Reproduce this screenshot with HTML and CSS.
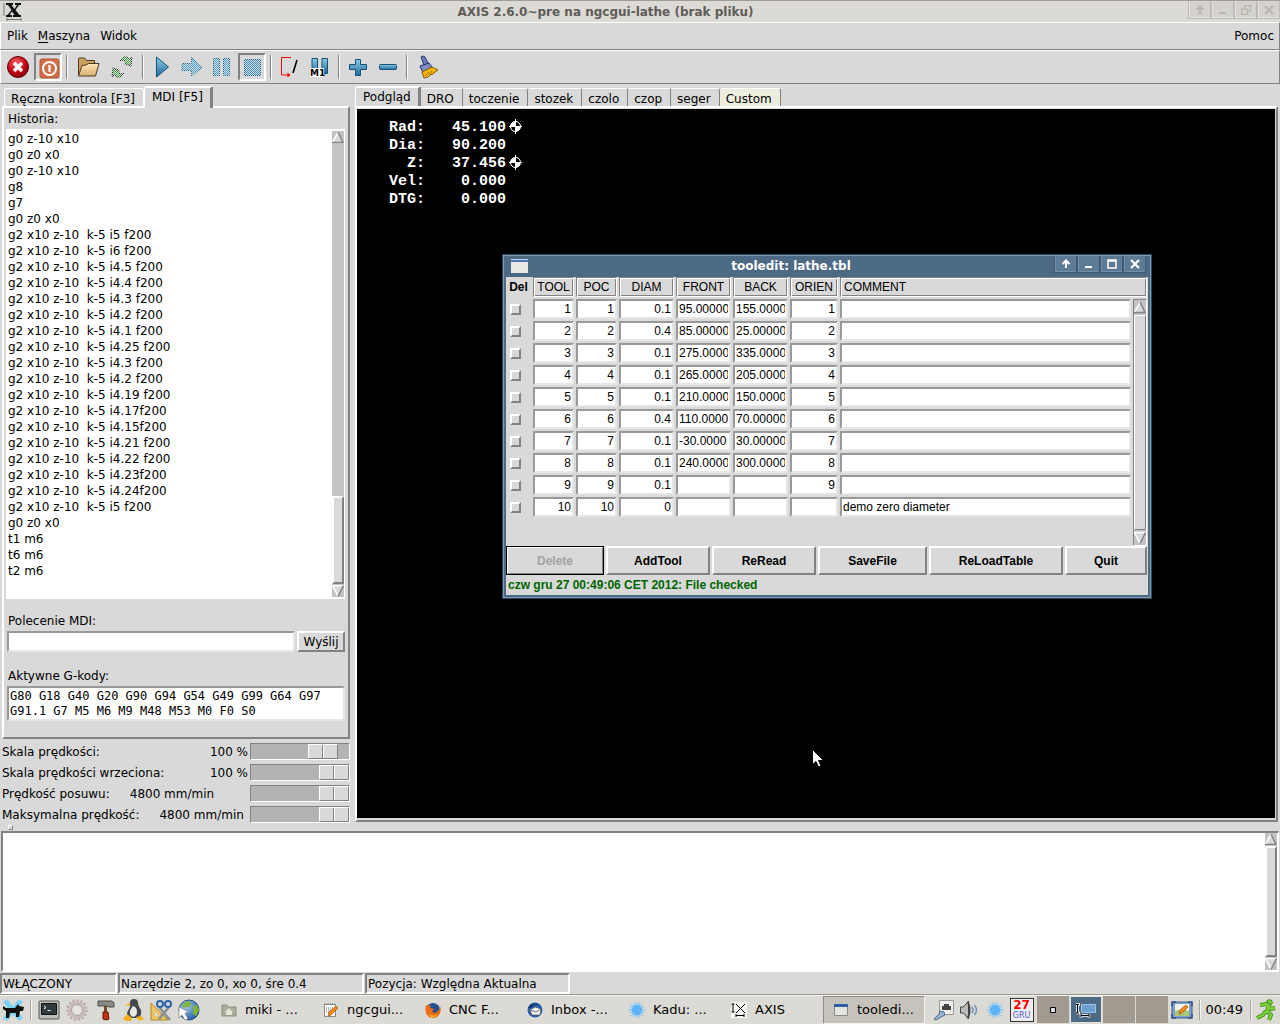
FILE: index.html
```html
<!DOCTYPE html>
<html lang="pl">
<head>
  <meta charset="UTF-8" />
  <meta name="viewport" content="width=device-width, initial-scale=1.0"/>
  <title>AXIS 2.6.0~pre na ngcgui-lathe (brak pliku)</title>
  <link rel="stylesheet" href="styles.css">
</head>
<body>
  <!-- Shared shapes -->
  <svg class="defs" width="0" height="0" aria-hidden="true">
    <defs>
      <linearGradient id="blue" x1="0" y1="0" x2="0" y2="1"><stop offset="0" stop-color="#8fc9e4"/><stop offset="1" stop-color="#1c6c98"/></linearGradient>
      <linearGradient id="folderFill" x1="0" y1="0" x2="0" y2="1"><stop offset="0" stop-color="#ffe6ba"/><stop offset="1" stop-color="#d9ae70"/></linearGradient>
      <radialGradient id="redFill" cx=".4" cy=".3" r=".7"><stop offset="0" stop-color="#f2646a"/><stop offset=".6" stop-color="#cc0a18"/><stop offset="1" stop-color="#8d0009"/></radialGradient>
      <radialGradient id="globeFill" cx=".35" cy=".3" r=".8"><stop offset="0" stop-color="#a9d0f5"/><stop offset="1" stop-color="#1c5299"/></radialGradient>
      <pattern id="dots" width="2" height="2" patternUnits="userSpaceOnUse"><path d="M0 0h1v1H0zM1 1h1v1H1z" fill="#d9d9d9"/></pattern>
    </defs>
    <symbol id="up" viewBox="0 0 12 12"><path d="M0 12L6 0l6 12z" fill="#d9d9d9"/><path d="M.5 11.5L6 1" stroke="#fff" stroke-width="1.5"/><path d="M6 1l5 10.500H0" fill="none" stroke="#828282" stroke-width="1.500"/></symbol>
    <symbol id="down" viewBox="0 0 12 12"><path d="M0 0l6 12 6-12z" fill="#d9d9d9"/><path d="M12 .5H.5L6 11.500" fill="none" stroke="#fff" stroke-width="1.500"/><path d="M6 11.500L11.500.5" stroke="#828282" stroke-width="1.500"/></symbol>
    <symbol id="home" viewBox="0 0 13 15"><circle cx="6.500" cy="7.500" r="5" fill="#fff" stroke="#fff"/><path d="M6.500 7.500v-4.500a4.500 4.500 0 0 1 4.500 4.500zM6.500 7.500v4.500a4.500 4.500 0 0 1-4.500-4.500z" fill="#000"/><path d="M6.500 0v15M0 7.500h13" stroke="#fff"/></symbol>
    <symbol id="sun" viewBox="0 0 16 16"><path d="M8 0v16M0 8h16M2.300 2.300l11.400 11.400M13.700 2.300L2.300 13.700M5 .6l6 14.800M11 .6L5 15.400M.6 5l14.800 6M15.400 5L.6 11" stroke="#8cc8f6" stroke-width="1.300"/><circle cx="8" cy="8" r="5.200" fill="#5db5f5"/></symbol>
    <symbol id="wup" viewBox="0 0 10 10"><path d="M5 9V2M1.500 5L5 1.500 8.500 5" fill="none" stroke="currentColor" stroke-width="2"/></symbol>
    <symbol id="wmin" viewBox="0 0 10 10"><path d="M1 8h7" stroke="currentColor" stroke-width="2"/></symbol>
    <symbol id="wmax" viewBox="0 0 10 10"><path d="M1 1h8v8H1zM1 2h8" fill="none" stroke="currentColor" stroke-width="1.500"/></symbol>
    <symbol id="wrest" viewBox="0 0 10 10"><path d="M.5 4h6v5.500h-6zM3.500 3.500V.8h6v5H7" fill="none" stroke="currentColor" stroke-width="1.300"/></symbol>
    <symbol id="wclose" viewBox="0 0 10 10"><path d="M1 1l8 8M9 1L1 9" stroke="currentColor" stroke-width="2.200"/></symbol>
  </svg>

  <header class="titlebar">
    <svg class="xlogo" width="20" height="20" viewBox="0 0 20 20"><path d="M1 1v13M4 17.500h14M4 16v3M18 16v3" stroke="#777"/><path d="M3 1h7v2H8.500l3 4 2.500-4H12V1h6v2h-2l-3.500 5 4 5H18v2h-8v-2h1.500l-2.500-3.500L6.500 13H9v2H3v-2h1.500l4-5L5 3H3z" fill="#111"/></svg>
    <h1>AXIS 2.6.0~pre na ngcgui-lathe (brak pliku)</h1>
    <div class="winbuttons">
      <button type="button" aria-label="Zwiń"><svg width="10" height="10"><use href="#wup"/></svg></button>
      <button type="button" aria-label="Minimalizuj"><svg width="10" height="10"><use href="#wmin"/></svg></button>
      <button type="button" aria-label="Przywróć"><svg width="10" height="10"><use href="#wrest"/></svg></button>
      <button type="button" aria-label="Zamknij"><svg width="10" height="10"><use href="#wclose"/></svg></button>
    </div>
  </header>

  <nav class="menubar">
    <button type="button">Plik</button>
    <button type="button"><u>M</u>aszyna</button>
    <button type="button">Widok</button>
    <button type="button" class="help">Pomoc</button>
  </nav>

  <div class="toolbar">
    <button type="button" aria-label="Stop awaryjny"><svg width="24" height="24" viewBox="0 0 24 24"><circle cx="12" cy="12" r="10.500" fill="url(#redFill)" stroke="#5c0006"/><path d="M8 8l8 8M16 8l-8 8" stroke="#fff" stroke-width="3.400"/></svg></button>
    <button type="button" class="pressed" aria-label="Zasilanie"><svg width="24" height="24" viewBox="0 0 24 24"><rect x="4" y="4" width="19" height="19" rx="2" fill="#d0704a" stroke="#b4512e"/><circle cx="13.500" cy="13.500" r="6.500" fill="none" stroke="#fff" stroke-width="2"/><path d="M13.500 10v7" stroke="#fff" stroke-width="2.200"/></svg></button>
    <i class="sep"></i>
    <button type="button" class="wide" aria-label="Otwórz"><svg width="24" height="24" viewBox="0 0 24 24"><path d="M2.500 20V4q0-1 1-1h5l2 2.500h8V9" fill="#c99f62" stroke="#4d3a20"/><path d="M2.500 21L6 10.500q5 0 6.500-2H23l-3.500 12.500z" fill="url(#folderFill)" stroke="#4d3a20"/></svg></button>
    <button type="button" class="wide" aria-label="Przeładuj"><svg width="24" height="24" viewBox="0 0 24 24"><path d="M10 5.500C13 1 18 1 19.500 4L22 2.500 21 11l-7-2.500L16.500 7C15 5 13 5 10 5.500z" fill="#3faf3f" stroke="#222"/><path d="M14 18.500C11 23 6 23 4.500 20L2 21.500 3 13l7 2.500L7.500 17c1.500 2 3.500 2 6.500 1.500z" fill="#3faf3f" stroke="#222"/><path d="M0 0h24v24H0z" fill="url(#dots)"/></svg></button>
    <i class="sep"></i>
    <button type="button" aria-label="Start"><svg width="24" height="24" viewBox="0 0 24 24"><path d="M6.500 2v20l12-10z" fill="url(#blue)" stroke="#12527a" stroke-linejoin="round"/></svg></button>
    <button type="button" aria-label="Krok"><svg width="24" height="24" viewBox="0 0 24 24"><path d="M2 8.500h9.500v-6L22 12l-10.500 9.500v-6H2z" fill="#4fa3cf" stroke="#12628f"/><path d="M0 0h24v24H0z" fill="url(#dots)"/></svg></button>
    <button type="button" aria-label="Pauza"><svg width="24" height="24" viewBox="0 0 24 24"><path d="M3.500 3.500h6v17h-6zM13.500 3.500h6v17h-6z" fill="#4fa3cf" stroke="#12628f"/><path d="M0 0h24v24H0z" fill="url(#dots)"/></svg></button>
    <button type="button" class="pressed" aria-label="Zatrzymaj"><svg width="24" height="24" viewBox="0 0 24 24"><path d="M4.500 4.500h16v16h-16z" fill="#3d8fbd" stroke="#12628f"/><path d="M0 0h24v24H0z" fill="url(#dots)"/></svg></button>
    <i class="sep"></i>
    <button type="button" aria-label="Pomiń bloki"><svg width="24" height="24" viewBox="0 0 24 24"><path d="M13 2.500H3.500v17.500H10" fill="none" stroke="#f00"/><path d="M9.500 17.500v5l3-2.500z" fill="#f00"/><path d="M15 18l4-13" stroke="#000" stroke-width="1.600"/></svg></button>
    <button type="button" aria-label="Stop opcjonalny"><svg width="24" height="24" viewBox="0 0 24 24"><path d="M4 3.500h5.500v15H4zM14 3.500h5.500v15H14z" fill="url(#blue)" stroke="#12527a"/><path d="M2 13h14v9H2z" fill="#fff"/><text x="2" y="21" class="m1">M1</text></svg></button>
    <i class="sep"></i>
    <button type="button" aria-label="Powiększ"><svg width="24" height="24" viewBox="0 0 24 24"><path d="M9.500 4.500h5v5h6v5h-6v6h-5v-6h-6v-5h6z" fill="url(#blue)" stroke="#12527a" stroke-linejoin="round"/></svg></button>
    <button type="button" aria-label="Pomniejsz"><svg width="24" height="24" viewBox="0 0 24 24"><rect x="3.500" y="9.500" width="17" height="5" rx="1" fill="url(#blue)" stroke="#12527a"/></svg></button>
    <i class="sep"></i>
    <button type="button" class="wide" aria-label="Wyczyść"><svg width="24" height="24" viewBox="0 0 24 24"><path d="M5 2q2-2 4 0l4 8-4 3z" fill="#6c7fc0" stroke="#26336b"/><path d="M4 11l9-3 3 4-9 6z" fill="#7c8dc8" stroke="#26336b"/><path d="M6 17l10-5 6 3-3 2-2 2-3 1-2 2-4 1z" fill="#f5b70a" stroke="#8a5a00"/><path d="M9 21l4-4M13 20l3-4" stroke="#a86f00"/></svg></button>
  </div>

  <main class="main">
    <section class="side">
      <div class="tabs" role="tablist">
        <button type="button" role="tab" class="tab">Ręczna kontrola [F3]</button>
        <button type="button" role="tab" class="tab active" aria-selected="true">MDI [F5]</button>
      </div>
      <div class="page">
        <div class="label">Historia:</div>
        <div class="history">
          <ul>
            <li>g0 z-10 x10</li>
            <li>g0 z0 x0</li>
            <li>g0 z-10 x10</li>
            <li>g8</li>
            <li>g7</li>
            <li>g0 z0 x0</li>
            <li>g2 x10 z-10  k-5 i5 f200</li>
            <li>g2 x10 z-10  k-5 i6 f200</li>
            <li>g2 x10 z-10  k-5 i4.5 f200</li>
            <li>g2 x10 z-10  k-5 i4.4 f200</li>
            <li>g2 x10 z-10  k-5 i4.3 f200</li>
            <li>g2 x10 z-10  k-5 i4.2 f200</li>
            <li>g2 x10 z-10  k-5 i4.1 f200</li>
            <li>g2 x10 z-10  k-5 i4.25 f200</li>
            <li>g2 x10 z-10  k-5 i4.3 f200</li>
            <li>g2 x10 z-10  k-5 i4.2 f200</li>
            <li>g2 x10 z-10  k-5 i4.19 f200</li>
            <li>g2 x10 z-10  k-5 i4.17f200</li>
            <li>g2 x10 z-10  k-5 i4.15f200</li>
            <li>g2 x10 z-10  k-5 i4.21 f200</li>
            <li>g2 x10 z-10  k-5 i4.22 f200</li>
            <li>g2 x10 z-10  k-5 i4.23f200</li>
            <li>g2 x10 z-10  k-5 i4.24f200</li>
            <li>g2 x10 z-10  k-5 i5 f200</li>
            <li>g0 z0 x0</li>
            <li>t1 m6</li>
            <li>t6 m6</li>
            <li>t2 m6</li>
          </ul>
          <div class="scrollbar">
            <svg width="12" height="12"><use href="#up"/></svg>
            <div class="trough"><div class="thumb" style="height:20%"></div></div>
            <svg width="12" height="12"><use href="#down"/></svg>
          </div>
        </div>
        <label class="label" for="mdi">Polecenie MDI:</label>
        <div class="mdi">
          <input type="text" id="mdi" name="mdi">
          <button type="button">Wyślij</button>
        </div>
        <label class="label" for="gcodes">Aktywne G-kody:</label>
        <textarea id="gcodes" class="gcodes" rows="2" readonly>G80 G18 G40 G20 G90 G94 G54 G49 G99 G64 G97
G91.1 G7 M5 M6 M9 M48 M53 M0 F0 S0</textarea>
      </div>

      <div class="scales">
        <div class="scale"><label for="feed">Skala prędkości:</label><output class="percent">100 %</output><input type="range" id="feed" min="0" max="120" value="100"></div>
        <div class="scale"><label for="spindle">Skala prędkości wrzeciona:</label><output class="percent">100 %</output><input type="range" id="spindle" min="0" max="100" value="100"></div>
        <div class="scale"><label for="jog">Prędkość posuwu:</label><output class="speed">4800 mm/min</output><input type="range" id="jog" min="0" max="4800" value="4800"></div>
        <div class="scale"><label for="maxvel">Maksymalna prędkość:</label><output class="speed">4800 mm/min</output><input type="range" id="maxvel" min="0" max="4800" value="4800"></div>
      </div>
    </section>

    <section class="view">
      <div class="tabs" role="tablist">
        <button type="button" role="tab" class="tab active" aria-selected="true">Podgląd</button>
        <button type="button" role="tab" class="tab">DRO</button>
        <button type="button" role="tab" class="tab">toczenie</button>
        <button type="button" role="tab" class="tab">stozek</button>
        <button type="button" role="tab" class="tab">czolo</button>
        <button type="button" role="tab" class="tab">czop</button>
        <button type="button" role="tab" class="tab">seger</button>
        <button type="button" role="tab" class="tab custom">Custom</button>
      </div>
      <div class="preview">
        <dl class="dro">
          <dt>Rad:</dt><dd>45.100</dd><dd><svg width="13" height="15"><use href="#home"/></svg></dd>
          <dt>Dia:</dt><dd>90.200</dd><dd></dd>
          <dt>Z:</dt><dd>37.456</dd><dd><svg width="13" height="15"><use href="#home"/></svg></dd>
          <dt>Vel:</dt><dd>0.000</dd><dd></dd>
          <dt>DTG:</dt><dd>0.000</dd><dd></dd>
        </dl>

        <!-- Tool table editor -->
        <div class="window" role="dialog" aria-labelledby="tooledit-title">
          <div class="window-title">
            <svg width="17" height="14" viewBox="0 0 17 14"><path d="M0 0h17v14H0z" fill="#e8e8e4"/><path d="M0 0h17v3H0z" fill="#4a78b8"/><path d="M0 0h17v1H0z" fill="#c5d4e8"/></svg>
            <h2 id="tooledit-title">tooledit: lathe.tbl</h2>
            <div class="winbuttons">
              <button type="button" aria-label="Zwiń"><svg width="10" height="10"><use href="#wup"/></svg></button>
              <button type="button" aria-label="Minimalizuj"><svg width="10" height="10"><use href="#wmin"/></svg></button>
              <button type="button" aria-label="Maksymalizuj"><svg width="10" height="10"><use href="#wmax"/></svg></button>
              <button type="button" aria-label="Zamknij"><svg width="10" height="10"><use href="#wclose"/></svg></button>
            </div>
          </div>
          <div class="window-body">
            <table class="tools">
              <colgroup><col class="c-del"><col class="c-id"><col class="c-id"><col class="c-num"><col class="c-num"><col class="c-num"><col class="c-orien"><col><col class="c-scroll"></colgroup>
              <thead>
                <tr><th class="del">Del</th><th><span>TOOL</span></th><th><span>POC</span></th><th><span>DIAM</span></th><th><span>FRONT</span></th><th><span>BACK</span></th><th><span>ORIEN</span></th><th colspan="2" class="comment"><span>COMMENT</span></th></tr>
              </thead>
              <tbody id="tools">
              </tbody>
            </table>
            <div class="actions">
              <button type="button" class="default" disabled>Delete</button>
              <button type="button">AddTool</button>
              <button type="button">ReRead</button>
              <button type="button">SaveFile</button>
              <button type="button">ReLoadTable</button>
              <button type="button">Quit</button>
            </div>
            <p class="message">czw gru 27 00:49:06 CET 2012: File checked</p>
          </div>
        </div>
        <svg class="pointer" width="12" height="19" viewBox="0 0 12 19"><path d="M.5.5v15l3.500-3 2.500 5.500 2.500-1-2.500-5.500h5z" fill="#fff" stroke="#000"/></svg>
      </div>
    </section>
  </main>

  <div class="sash"><i></i></div>
  <section class="log">
    <div class="scrollbar">
      <svg width="12" height="12"><use href="#up"/></svg>
      <div class="trough"><div class="thumb" style="height:100%"></div></div>
      <svg width="12" height="12"><use href="#down"/></svg>
    </div>
  </section>

  <footer class="status">
    <span class="state">WŁĄCZONY</span>
    <span class="tool">Narzędzie 2, zo 0, xo 0, śre 0.4</span>
    <span class="position">Pozycja: Względna Aktualna</span>
  </footer>

  <nav class="taskbar">
    <div class="launchers">
      <a href="#" aria-label="Menu"><svg width="22" height="22" viewBox="0 0 22 22"><path d="M1 3l4-3 6 7 6-7 4 3-6 8 6 8-4 3-6-7-6 7-4-3 6-8z" fill="#7fd0f5"/><path d="M1 7l3 2h9l3-4 1 2 5 1-1 4h-3l-1 6h-3v-4H8l-1 5H4v-7l-3-2z" fill="#111"/></svg></a>
      <i class="sep"></i>
      <a href="#" aria-label="Terminal"><svg width="22" height="22" viewBox="0 0 22 22"><rect x="1" y="2" width="20" height="18" rx="1" fill="#bdbfba" stroke="#555753"/><path d="M3.500 4.500h15v11h-15z" fill="#2e3a3c" stroke="#111"/><path d="M6 7l2 1.500L6 10M9.500 11.500h3" fill="none" stroke="#fff"/></svg></a>
      <a href="#" aria-label="Ustawienia"><svg width="22" height="22" viewBox="0 0 22 22"><circle cx="11" cy="11" r="9.500" fill="none" stroke="#b7a3a3" stroke-width="2.500" stroke-dasharray="2 2"/><circle cx="11" cy="11" r="7.500" fill="none" stroke="#c9bcbc" stroke-width="3"/><circle cx="11" cy="11" r="5.500" fill="#e6e3e0" stroke="#a39a9a"/></svg></a>
      <a href="#" aria-label="Narzędzia"><svg width="22" height="22" viewBox="0 0 22 22"><path d="M10 7h3v7h-3z" fill="#7a4a20"/><path d="M9 13h5l1 7q-3 2-6 0z" fill="#c43010" stroke="#5c1a08"/><path d="M4 2h14l2 2v4h-5l-2-1H4z" fill="#8b8b86" stroke="#4c4c48"/></svg></a>
      <a href="#" aria-label="Linux"><svg width="22" height="22" viewBox="0 0 22 22"><path d="M8 4q0-4 4-4t4 4q0 3 3 7 1 4-2 8H7q-4-4 0-9 2-3 1-6z" fill="#44484c"/><path d="M11 7q4 1 4 6 0 4-4 5-4-2-3-6 1-3 3-5z" fill="#e8e8e6"/><path d="M8 4l-5 2 5 1zM1 20l4-5 5 4-1 3-5 0zM14 18l5-1 3 3-5 2z" fill="#f3b21b"/></svg></a>
      <a href="#" aria-label="Grafika"><svg width="22" height="22" viewBox="0 0 22 22"><path d="M1 4v17h17z" fill="#e9c46a" stroke="#b08a20"/><path d="M5 13v4h4z" fill="#dcdad5"/><path d="M9 8l11 13M19 8L9 20" stroke="#8a8f94" stroke-width="2.500"/><circle cx="10" cy="5" r="3" fill="none" stroke="#2e62a8" stroke-width="2"/><circle cx="18" cy="5" r="3" fill="none" stroke="#2e62a8" stroke-width="2"/></svg></a>
      <a href="#" aria-label="Przeglądarka"><svg width="22" height="22" viewBox="0 0 22 22"><circle cx="11" cy="11" r="10" fill="url(#globeFill)" stroke="#274f86"/><path d="M7 3q5-2 6 1t-3 4-6 0q0-3 3-5zM15 7l4-1 2 5-3 6-3-2z" fill="#7db53c"/><path d="M1 8l10 5-4 1 3 6-3 1-3-5-3 3z" fill="#fff" stroke="#777" stroke-width=".6"/></svg></a>
    </div>
    <div class="tasks">
      <button type="button"><svg width="16" height="16" viewBox="0 0 16 16"><path d="M1 3h5l1 2h8v9H1z" fill="#a9ae9c" stroke="#8b907e"/><path d="M8 6l4 4h-1v3H5v-3H4z" fill="#e4e6dd"/></svg>miki - ...</button>
      <button type="button"><svg width="16" height="16" viewBox="0 0 16 16"><path d="M1.500 2.500h11v12h-11z" fill="#fff" stroke="#888"/><path d="M1 2h12M3 6h8M3 8h7M3 10h5" stroke="#777" stroke-dasharray="1 1"/><path d="M5 14l1-4 7-6 2 2-7 7z" fill="#f58a1f" stroke="#a04c00" stroke-width=".7"/></svg>ngcgui...</button>
      <button type="button"><svg width="16" height="16" viewBox="0 0 16 16"><circle cx="8" cy="8" r="7" fill="#24508f"/><path d="M1 3q3 1 5 0l-1 3 4 1-2 3q3 2 6-1t1-7q3 4 1 9t-7 5-7-5q-1-4 0-8z" fill="#ec6b12"/><path d="M3 11q4 5 10 1-3 4-7 3z" fill="#fbc62c"/></svg>CNC F...</button>
      <button type="button"><svg width="16" height="16" viewBox="0 0 16 16"><circle cx="8" cy="8" r="7.500" fill="#2660ad"/><path d="M3 8l5-3 6 2-1 6H5z" fill="#f2f2f2" stroke="#555" stroke-width=".7"/><path d="M3 8l6 2 5-3" fill="none" stroke="#777"/><path d="M1 6q4-7 12-3-6-1-8 3z" fill="#123a78"/></svg>Inbox -...</button>
      <button type="button"><svg width="16" height="16"><use href="#sun"/></svg>Kadu: ...</button>
      <button type="button"><svg width="16" height="16" viewBox="0 0 16 16"><path d="M0 0h16v16H0z" fill="#f4f4f2"/><path d="M2 2v8M.5 2h3M.5 10h3M5 13.500h8M5 12v3M13 12v3M5 2l9 9M14 2l-9 9" fill="none" stroke="#000"/></svg>AXIS</button>
      <button type="button" class="active"><svg width="16" height="16" viewBox="0 0 16 16"><path d="M1.500 2.500h13v11h-13z" fill="#e6e6e0" stroke="#85898c"/><path d="M1 2h14v3H1z" fill="#2e5fa3"/></svg>tooledi...</button>
    </div>
    <div class="tray">
      <svg width="22" height="22" viewBox="0 0 22 22"><path d="M6.500 1.500h14v14h-14z" fill="#eee" stroke="#999"/><path d="M9 11V7h2V5h5v2h2v4z" fill="#444"/><path d="M1 20l5-5 1-3 4 1 1 3-4 2-5 3z" fill="#9bb4d0" stroke="#4b6a8c"/></svg>
      <svg width="22" height="22" viewBox="0 0 22 22"><path d="M2.500 8h3l5-6v18l-5-6h-3z" fill="#bbb" stroke="#444"/><path d="M10 3q3 8 0 16" fill="none" stroke="#444" stroke-width="2"/><path d="M14 8q2 3 0 6M16.500 6q4 5 0 10" fill="none" stroke="#6f8fb5" stroke-width="1.400"/></svg>
      <svg width="24" height="16" viewBox="0 0 24 16"><use href="#sun" x="4" width="16" height="16"/></svg>
      <div class="calendar"><b>27</b><span>GRU</span></div>
      <div class="pager">
        <i><svg width="6" height="6"><path d="M.5.5h5v5h-5z" fill="#ddd" stroke="#000"/></svg></i>
        <i class="current"><svg width="22" height="16" viewBox="0 0 22 16"><path d="M6.500 2.500h14v8h-14z" fill="#6f9fcf" stroke="#9fc3e6"/><path d="M2.500 2v9M1 2.500h4M1 11h4M6 13.500h8M6 12v3.500M14 12v3.500" stroke="#fff" stroke-width="2.500"/><path d="M2.500 2v9M1 2.500h3M1 11h3M6 13.500h8M6 12v3M14 12v3" stroke="#000"/></svg></i>
        <i></i>
        <i></i>
      </div>
      <svg width="22" height="18" viewBox="0 0 22 18"><rect x="1" y="1" width="20" height="16" rx="2" fill="#7da0cc" stroke="#3c5c86"/><path d="M4 3h14v12H4z" fill="#f0f0e4"/><path d="M4 10q6-3 14 0v5H4z" fill="#a8c878"/><path d="M8 13l1-4 6-5 2 2-6 6z" fill="#f58a1f" stroke="#a04c00" stroke-width=".7"/><path d="M1 5V1h4M17 1h4v4M21 13v4h-4M5 17H1v-4" fill="none" stroke="#2f4f7c" stroke-width="1.500"/></svg>
      <i class="sep"></i>
      <time>00:49</time>
      <i class="sep"></i>
      <svg width="22" height="22" viewBox="0 0 22 22"><circle cx="14.500" cy="3.500" r="2.800" fill="#7ad03a" stroke="#3b8a10"/><path d="M5 6l7-1 2 2-2 5 4 4-2 5M12 7l4 3 4-1M11 12l-3 4-6 3" fill="none" stroke="#3b8a10" stroke-width="4" stroke-linejoin="round"/><path d="M5 6l7-1 2 2-2 5 4 4-2 5M12 7l4 3 4-1M11 12l-3 4-6 3" fill="none" stroke="#7ad03a" stroke-width="2.400" stroke-linejoin="round"/></svg>
    </div>
  </nav>

  <!-- Fill the tool table -->
  <script>
    const tools = [
      [1, 1, '0.1', '95.000000', '155.000000', 1, ''],
      [2, 2, '0.4', '85.000000', '25.000000', 2, ''],
      [3, 3, '0.1', '275.000000', '335.000000', 3, ''],
      [4, 4, '0.1', '265.000000', '205.000000', 4, ''],
      [5, 5, '0.1', '210.000000', '150.000000', 5, ''],
      [6, 6, '0.4', '110.000000', '70.000000', 6, ''],
      [7, 7, '0.1', '-30.0000', '30.000000', 7, ''],
      [8, 8, '0.1', '240.000000', '300.000000', 8, ''],
      [9, 9, '0.1', '', '', 9, ''],
      [10, 10, '0', '', '', '', 'demo zero diameter']
    ];
    const names = ['tool', 'poc', 'diam', 'front', 'back', 'orien', 'comment'];
    const scroll = `<td class="scrollcell" rowspan="11"><div class="scrollbar thin">
      <svg width="12" height="14"><use href="#up"/></svg>
      <div class="trough"><div class="thumb" style="height:100%"></div></div>
      <svg width="12" height="14"><use href="#down"/></svg></div></td>`;

    document.getElementById('tools').innerHTML = tools.map((row, i) => {
      const cells = row.map((value, n) =>
        `<td><input type="text" class="${names[n]}" aria-label="${names[n]} ${i + 1}" value="${value}"></td>`).join('');
      return `<tr><td class="del"><input type="checkbox" aria-label="Del ${i + 1}"></td>${cells}${i === 0 ? scroll : ''}</tr>`;
    }).join('') + '<tr class="filler"><td colspan="8"></td></tr>';
  </script>
</body>
</html>
```
FILE: styles.css
```css
* {
  box-sizing: border-box;
}

body {
  margin: 0;
  min-height: 100vh;
  display: flex;
  flex-direction: column;
  background: #d9d9d9;
  color: #000;
  font-family: 'DejaVu Sans', Verdana, sans-serif;
  font-size: 12px;
  line-height: 16px;
}

button, input, textarea {
  font: inherit;
  color: inherit;
  margin: 0;
  border-radius: 0;
}

button {
  background: #d9d9d9;
  padding: 0;
  border: 0;
}

svg {
  display: block;
  flex: none;
}

.defs {
  position: absolute;
}

/* Title bar */
.titlebar {
  height: 22px;
  display: flex;
  align-items: center;
  background: #dcdad5;
  border-top: 1px solid #a09c96;
  padding-left: 3px;
}

.titlebar h1, .window-title h2 {
  flex: 1;
  margin: 0;
  text-align: center;
  font-size: 12px;
  font-weight: bold;
}

.titlebar h1 {
  color: #5e5c58;
}

.winbuttons {
  display: flex;
  align-self: flex-start;
}

.winbuttons button {
  width: 23px;
  height: 18px;
  display: flex;
  align-items: center;
  justify-content: center;
  background: #d4d2cd;
  color: #b9b6b0;
  border: 1px solid #bfbcb6;
  border-top: 0;
  box-shadow: inset 1px -1px #e6e4e0;
}

/* Menu and toolbar */
.menubar, .toolbar {
  display: flex;
  align-items: center;
  border: 1px solid;
  border-color: #fff #828282 #828282 #fff;
}

.menubar {
  height: 28px;
  padding: 0 5px 0 6px;
  gap: 10px;
}

.menubar .help {
  margin-left: auto;
}

.menubar u {
  text-underline-offset: 2px;
}

.toolbar {
  height: 34px;
  padding: 0 3px;
  gap: 2px;
}

.toolbar button {
  width: 28px;
  height: 28px;
  display: flex;
  align-items: center;
  justify-content: center;
}

.toolbar .wide {
  width: 32px;
}

.toolbar .pressed {
  border: 2px solid;
  border-color: #828282 #fff #fff #828282;
}

.toolbar .sep {
  width: 2px;
  height: 24px;
  margin: 0 2px;
  border-left: 1px solid #828282;
  border-right: 1px solid #fff;
}

.m1 {
  font-size: 9px;
  font-weight: bold;
}

/* Main area */
.main {
  flex: 1;
  display: grid;
  grid-template-columns: 348px 1fr;
  gap: 5px;
  padding: 2px 2px 0;
}

.side, .view {
  display: flex;
  flex-direction: column;
  min-width: 0;
}

.tabs {
  display: flex;
  align-items: flex-end;
  height: 20px;
}

.tab {
  height: 18px;
  padding: 2px 8px 0 5px;
  border: 1px solid;
  border-color: #fff #828282 transparent transparent;
  border-bottom: 0;
  border-radius: 3px 3px 0 0;
}

.tab.active {
  height: 22px;
  margin-bottom: -2px;
  padding: 0 7px 3px;
  border-width: 2px 3px 0 1px;
  border-color: #fff #828282 #fff #fff;
  position: relative;
}

.tab.custom {
  background: #ececdf;
}

.side .tabs {
  padding-left: 2px;
}

.side .tab:not(.active) {
  padding: 2px 8px 0 6px;
  border-color: #fff;
}

.page {
  flex: 1;
  display: flex;
  flex-direction: column;
  padding: 3px 3px 16px 2px;
  border: 2px solid;
  border-color: #fff #828282 #828282 #fff;
}

.label {
  display: block;
  padding: 0 2px 2px;
}

.history {
  flex: 1;
  display: flex;
  justify-content: space-between;
  background: #fff;
  padding: 2px 1px;
  margin-bottom: 14px;
}

.history ul {
  list-style: none;
  margin: 0;
  padding: 0 1px;
}

.history li {
  white-space: pre;
}

.scrollbar {
  width: 12px;
  display: flex;
  flex-direction: column;
  gap: 1px;
  background: #c3c3c3;
}

.trough {
  flex: 1;
  display: flex;
  flex-direction: column;
  justify-content: flex-end;
}

.thumb {
  background: #d9d9d9;
  border: 2px solid;
  border-color: #fff #828282 #828282 #fff;
}

.mdi {
  display: flex;
  gap: 2px;
  margin: 0 0 16px 1px;
}

.mdi input, .gcodes, .tools input[type="text"] {
  background: #fff;
  border: 2px solid;
  border-color: #999 #e6e6e6 #e6e6e6 #999;
  outline: 0;
}

.mdi input {
  flex: 1;
  min-width: 0;
  height: 21px;
  padding: 0 2px;
}

.mdi button {
  width: 48px;
  height: 21px;
  border: 2px solid;
  border-color: #fff #828282 #828282 #fff;
}

.gcodes {
  height: 35px;
  margin-left: 1px;
  padding: 1px 1px 0;
  resize: none;
  overflow: hidden;
  white-space: pre;
  font-family: 'DejaVu Sans Mono', 'Liberation Mono', monospace;
  font-size: 12px;
  line-height: 15px;
}

.scales {
  padding-top: 2px;
}

.scale {
  height: 21px;
  display: flex;
  align-items: center;
}

.percent {
  margin-left: auto;
  padding-right: 2px;
}

.speed {
  margin-left: 20px;
  margin-right: auto;
}

.scale input {
  appearance: none;
  width: 100px;
  height: 17px;
  background: #b3b3b3;
  border: 1px solid;
  border-color: #828282 #fff #fff #828282;
}

.scale input::-webkit-slider-thumb {
  appearance: none;
  width: 30px;
  height: 15px;
  border: 1px solid;
  border-color: #fff #828282 #828282 #fff;
  background: linear-gradient(90deg, #d9d9d9 13px, #828282 13px, #828282 14px, #fff 14px, #fff 15px, #d9d9d9 15px);
}

/* Preview */
.preview {
  flex: 1;
  position: relative;
  background: #000;
  border: 2px solid;
  border-color: #fff #828282 #828282 #fff;
  margin-bottom: 3px;
  box-shadow: inset 0 1px #d9d9d9, inset -1px -2px #d9d9d9;
}

.dro {
  display: grid;
  grid-template-columns: 68px 81px 13px;
  grid-auto-rows: 18px;
  margin: 0;
  padding: 11px 0 0;
  color: #fff;
  font: bold 15px/18px 'Liberation Mono', 'Courier New', monospace;
  text-align: right;
}

.dro dd {
  margin: 0;
}

.dro dd svg {
  margin: 0 0 0 3px;
}

.pointer {
  position: absolute;
  left: 455px;
  top: 641px;
}

/* Tool editor window */
.window {
  position: absolute;
  left: 145px;
  top: 146px;
  width: 650px;
  background: #4d6a84;
  border: 1px solid #2f475c;
  box-shadow: inset 1px 1px #7f9ab2, inset -1px -1px #7f9ab2;
  padding: 1px 3px 3px;
}

.window-title {
  height: 21px;
  display: flex;
  align-items: center;
  padding: 0 2px 2px 5px;
}

.window-title h2 {
  color: #fff;
}

.window-title .winbuttons button {
  height: 17px;
  background: #5d7b95;
  color: #fff;
  border-color: #3f5a72;
  box-shadow: inset 1px -1px #7390a9;
}

.window-body {
  background: #d9d9d9;
  font-family: 'Liberation Sans', Arial, sans-serif;
  font-size: 12px;
  line-height: 16px;
}

.tools {
  width: 100%;
  table-layout: fixed;
  border-collapse: collapse;
}

.c-del { width: 27px; }
.c-id { width: 43px; }
.c-num { width: 57px; }
.c-orien { width: 50px; }
.c-scroll { width: 15px; }

.tools th, .tools td {
  padding: 0 2px 2px 0;
  font-weight: normal;
}

.tools th span {
  display: block;
  height: 20px;
  border: 1px solid;
  border-color: #828282 #fff #fff #828282;
  box-shadow: inset 1px 1px #fff, inset -1px -1px #828282;
  line-height: 18px;
}

.tools th.del {
  font-weight: bold;
}

.tools th.comment {
  text-align: left;
  padding-right: 1px;
}

.tools th.comment span {
  padding-left: 3px;
}

.tools input[type="text"] {
  display: block;
  width: 100%;
  height: 20px;
  padding: 0 1px;
  text-align: right;
}

.tools input.front, .tools input.back, .tools input.comment {
  text-align: left;
}

.tools td.del {
  padding-left: 4px;
}

.tools input[type="checkbox"] {
  appearance: none;
  display: block;
  width: 11px;
  height: 11px;
  border: 2px solid;
  border-color: #fff #828282 #828282 #fff;
}

.tools .scrollcell {
  padding: 0;
  vertical-align: top;
}

.scrollbar.thin {
  width: 14px;
  height: 247px;
  border: 1px solid;
  border-color: #828282 #fff #fff #828282;
}

.thin .thumb {
  border-width: 1px;
}

.filler td {
  height: 27px;
}

.actions {
  display: grid;
  grid-template-columns: 98px 104px 104px 109px 134px 1fr;
  gap: 2px;
  padding-right: 1px;
}

.actions button {
  height: 29px;
  font-weight: bold;
  border: 2px solid;
  border-color: #fff #828282 #828282 #fff;
}

.actions .default {
  color: #a3a3a3;
  outline: 1px solid #000;
  outline-offset: -1px;
}

.message {
  margin: 0;
  padding: 2px 2px 2px;
  color: #006400;
  font-weight: bold;
}

/* Log */
.sash {
  height: 6px;
  padding-left: 8px;
}

.sash i {
  display: block;
  width: 5px;
  height: 5px;
  border: 1px solid;
  border-color: #fff #828282 #828282 #fff;
}

.log {
  height: 141px;
  display: flex;
  justify-content: flex-end;
  margin: 0 1px 1px;
  padding-right: 1px;
  background: #fff;
  border: 2px solid;
  border-color: #828282 #fff #fff #828282;
  border-right-width: 1px;
}

/* Status bar */
.status {
  height: 21px;
  display: flex;
  gap: 1px;
}

.status span {
  padding-left: 1px;
  border: 2px solid;
  border-color: #828282 #fff #fff #828282;
  line-height: 18px;
}

.state { width: 117px; }
.tool { width: 246px; }
.position { width: 205px; }

/* Taskbar */
.taskbar {
  height: 30px;
  display: flex;
  align-items: center;
  background: #dcdad5;
  border-top: 1px solid #9c9888;
  box-shadow: inset 0 1px #f4f3f0;
  font-size: 13px;
}

.taskbar .sep {
  width: 2px;
  height: 20px;
  border-left: 1px solid #a8a49c;
  border-right: 1px solid #f4f3f0;
}

.launchers {
  display: flex;
  align-items: center;
  gap: 6px;
  padding-left: 2px;
}

.tasks {
  flex: 1;
  display: flex;
  padding-left: 11px;
}

.tasks button {
  flex: 0 1 102px;
  height: 28px;
  display: flex;
  align-items: center;
  gap: 8px;
  padding-left: 9px;
  background: none;
  white-space: nowrap;
  border: 1px solid transparent;
}

.tasks .active {
  background: #c6c3bd;
  border-color: #8f8b84 #f4f3f0 #f4f3f0 #8f8b84;
}

.tray {
  display: flex;
  align-items: center;
  gap: 3px;
  padding-right: 3px;
}

.calendar {
  width: 24px;
  height: 24px;
  border: 1px solid #333;
  background: #eee;
  text-align: center;
  line-height: 12px;
}

.calendar b {
  display: block;
  color: #f00;
  font-size: 12px;
}

.calendar span {
  display: block;
  color: #55c;
  font-size: 8px;
  line-height: 9px;
}

.pager {
  display: flex;
  gap: 1px;
}

.pager i {
  width: 32px;
  height: 27px;
  display: flex;
  align-items: center;
  justify-content: center;
  background: #a09a91;
}

.pager .current {
  background: #4d6a84;
  border: 1px solid #e6e4e0;
}

.tray .sep {
  margin-left: 3px;
}

time {
  padding: 0 1px 0 2px;
}
```
